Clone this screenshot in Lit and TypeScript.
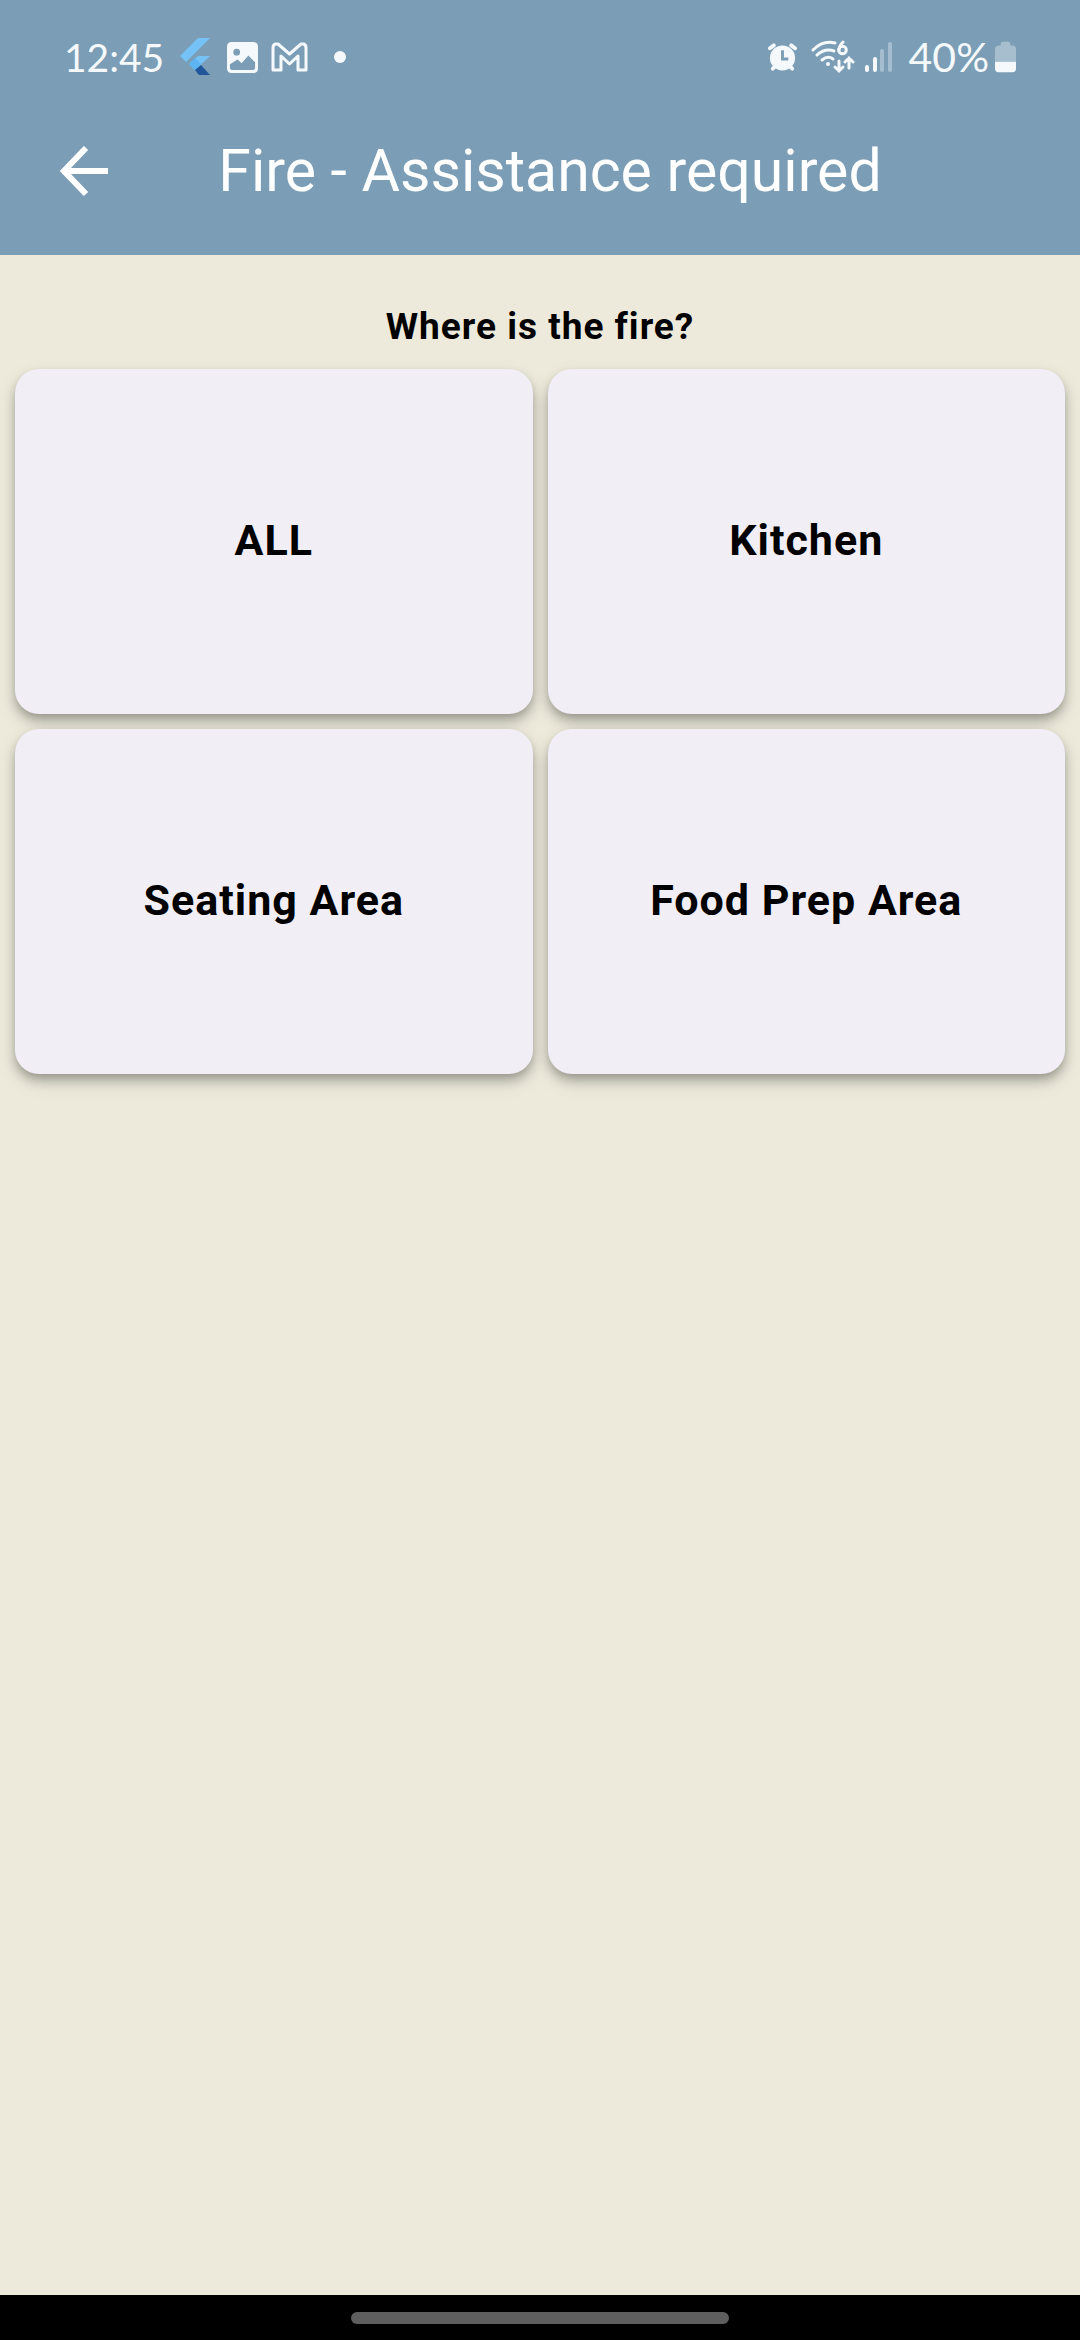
import { LitElement, html, css } from "lit";
import { customElement, property } from "lit/decorators.js";

@customElement("status-bar")
class StatusBar extends LitElement {
  static styles = css`
    :host {
      display: block;
      color: #f5f9fc;
      font-family: Lato, "Open Sans", sans-serif;
    }
    .bar {
      display: flex;
      justify-content: space-between;
      height: 84px;
      padding: 30px 64px 0;
      box-sizing: border-box;
    }
    .group {
      display: flex;
      align-items: center;
      height: 54px;
    }
    .text {
      font-size: 41px;
      line-height: 54px;
    }
    .time { font-size: 39px; }
    svg {
      display: block;
      flex: none;
    }
    .flutter { margin-left: 16px; }
    .picture { margin-left: 16px; }
    .mail { margin-left: 13px; }
    .dot { margin-left: 26px; }
    .wifi { margin-left: 14px; }
    .signal { margin-left: 10px; }
    .level { margin-left: 16px; }
    .battery { margin-left: 6px; }
  `;

  render() {
    return html`
      <div class="bar">
        <div class="group">
          <span class="text time">12:45</span>
          <svg class="flutter" width="31" height="38" viewBox="0 0 31 38">
            <path fill="#75c2f6" d="M18 0H30L6 24L0 18Z" />
            <path fill="#75c2f6" d="M18 18H30L15 32L9 26Z" />
            <path fill="#5cb4f1" d="M15 20L21 26L15 32L9 26Z" />
            <path fill="#22569b" d="M15 32L21 27L30 37H19Z" />
          </svg>
          <svg class="picture" width="31" height="31" viewBox="0 0 32 32">
            <path
              fill="currentColor"
              fill-rule="evenodd"
              d="M5 0H27Q32 0 32 5V27Q32 32 27 32H5Q0 32 0 27V5Q0 0 5 0ZM3 23V26Q3 29 6 29H26Q29 29 29 26V21L22 14L15 22L11 18ZM10 7A3.5 3.5 0 1 0 10 14A3.5 3.5 0 1 0 10 7Z"
            />
          </svg>
          <svg class="mail" width="37" height="30" viewBox="0 0 37 30">
            <path
              fill="none"
              stroke="currentColor"
              stroke-width="3"
              stroke-linejoin="round"
              d="M2 6Q2 2 5 2H7L18.5 12L30 2H32Q35 2 35 6V28H27V14L18.5 22L10 14V28H2Z"
            />
          </svg>
          <svg class="dot" width="12" height="12" viewBox="0 0 12 12">
            <circle cx="6" cy="6" r="6" fill="currentColor" />
          </svg>
        </div>
        <div class="group">
          <svg width="29" height="30" viewBox="0 0 30 30">
            <circle cx="15" cy="16" r="13" fill="currentColor" />
            <path
              fill="none"
              stroke="currentColor"
              stroke-width="4"
              stroke-linecap="round"
              d="M2 6L6 3M28 6L24 3M5 27L8 24M25 27L22 24"
            />
            <path fill="none" stroke="#7b9eb6" stroke-width="3" d="M15 8V17H21" />
          </svg>
          <svg class="wifi" width="44" height="34" viewBox="0 0 44 34">
            <g fill="none" stroke="currentColor" stroke-width="3" stroke-linecap="round">
              <path d="M2 10Q12 0 24 3" />
              <path d="M6 15Q14 8 23 11" />
              <path d="M11 20Q17 15 22 19" />
              <path d="M32 2Q28 6 28 10" />
              <circle cx="31.5" cy="10" r="3.8" />
              <path d="M28 21V31M24 27L28 31L32 27" />
              <path d="M38 28V18M34 22L38 18L42 22" />
            </g>
            <circle cx="17" cy="24" r="2" fill="currentColor" />
          </svg>
          <svg class="signal" width="28" height="30" viewBox="0 0 28 30">
            <g stroke="currentColor" stroke-width="4" stroke-linecap="round">
              <path d="M2 25V28" />
              <path d="M10 17V28" />
              <path d="M17 9V28" opacity="0.35" />
              <path d="M25 2V28" opacity="0.35" />
            </g>
          </svg>
          <span class="text level">40%</span>
          <svg class="battery" width="21" height="32" viewBox="0 0 22 32">
            <path
              fill="currentColor"
              opacity="0.35"
              d="M6 4V2Q6 0 8 0H14Q16 0 16 2V4H18Q22 4 22 8V21H0V8Q0 4 4 4Z"
            />
            <path fill="currentColor" d="M0 21H22V28Q22 32 18 32H4Q0 32 0 28Z" />
          </svg>
        </div>
      </div>
    `;
  }
}

@customElement("area-card")
class AreaCard extends LitElement {
  @property() label = "";

  static styles = css`
    :host {
      display: grid;
    }
    .card {
      border: 0;
      margin: 0;
      padding: 14px 16px 18px;
      border-radius: 24px;
      background: #f1eef5;
      color: #000;
      font: 700 43px/56px Roboto, sans-serif;
      letter-spacing: 1px;
      box-shadow:
        0 7px 12px -1px rgba(0, 0, 0, 0.25),
        0 3px 6px rgba(0, 0, 0, 0.06),
        0 8px 20px rgba(0, 0, 0, 0.1);
      cursor: pointer;
    }
  `;

  render() {
    return html`<button class="card" type="button">${this.label}</button>`;
  }
}

@customElement("app-root")
class AppRoot extends LitElement {
  private areas = ["ALL", "Kitchen", "Seating Area", "Food Prep Area"];

  static styles = css`
    :host {
      display: flex;
      flex-direction: column;
      min-height: 100vh;
      background: #edeadb;
      font-family: Roboto, sans-serif;
    }
    .header {
      background: #7b9eb6;
      color: #fff;
    }
    .toolbar {
      display: grid;
      grid-template-columns: 168px 1fr 148px;
      align-items: center;
      height: 171px;
      padding-top: 2px;
      box-sizing: border-box;
    }
    .back {
      justify-self: center;
      display: grid;
      padding: 12px;
      border: 0;
      background: none;
      color: inherit;
      cursor: pointer;
    }
    .title {
      margin: 0;
      text-align: center;
      font-size: 59px;
      line-height: 72px;
      font-weight: 400;
      white-space: nowrap;
    }
    .content {
      flex: 1;
      padding: 48px 15px 15px;
    }
    .question {
      margin: 0 0 18px;
      text-align: center;
      color: #000;
      font-size: 37px;
      line-height: 48px;
      font-weight: 700;
      letter-spacing: 1px;
    }
    .grid {
      display: grid;
      grid-template-columns: 1fr 1fr;
      grid-auto-rows: 345px;
      gap: 15px;
    }
    .nav {
      display: flex;
      align-items: center;
      justify-content: center;
      height: 45px;
      background: #000;
    }
    .handle {
      width: 35%;
      height: 12px;
      border-radius: 6px;
      background: #5e5e5e;
    }
  `;

  render() {
    return html`
      <header class="header">
        <status-bar></status-bar>
        <div class="toolbar">
          <button class="back" type="button" aria-label="Back">
            <svg width="48" height="50" viewBox="0 0 48 50">
              <path fill="none" stroke="#fff" stroke-width="6" d="M48 25H4M26 2L4 25L26 48" />
            </svg>
          </button>
          <h1 class="title">Fire - Assistance required</h1>
        </div>
      </header>
      <main class="content">
        <h2 class="question">Where is the fire?</h2>
        <div class="grid">
          ${this.areas.map((a) => html`<area-card .label=${a}></area-card>`)}
        </div>
      </main>
      <footer class="nav"><div class="handle"></div></footer>
    `;
  }
}
